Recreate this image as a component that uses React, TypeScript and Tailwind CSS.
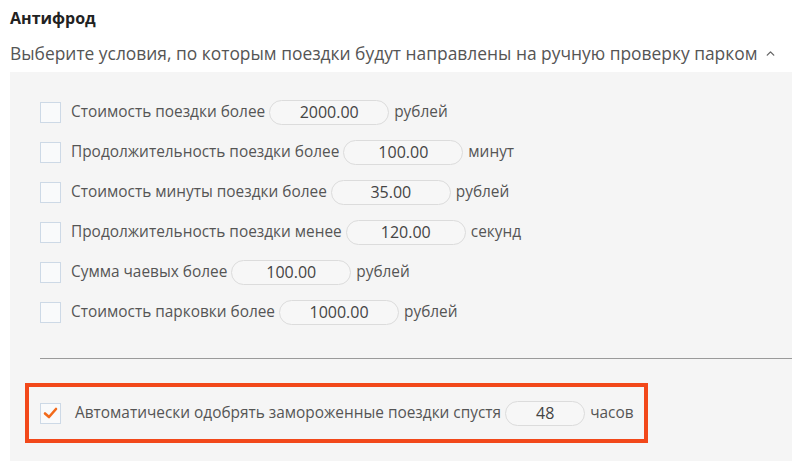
import { ChevronUp } from "lucide-react"

const rows = [
  { label: "Стоимость поездки более", value: "2000.00", unit: "рублей" },
  { label: "Продолжительность поездки более", value: "100.00", unit: "минут" },
  { label: "Стоимость минуты поездки более", value: "35.00", unit: "рублей" },
  { label: "Продолжительность поездки менее", value: "120.00", unit: "секунд" },
  { label: "Сумма чаевых более", value: "100.00", unit: "рублей" },
  { label: "Стоимость парковки более", value: "1000.00", unit: "рублей" },
]

function Box({ checked }: { checked?: boolean }) {
  return (
    <span className="flex h-[21px] w-[21px] shrink-0 items-center justify-center border border-[#cdd9e6] bg-[#f9fafb]">
      {checked && (
        <svg width="15" height="12" viewBox="0 0 15 12">
          <path d="M2 6.5 L6 10 L13 2" fill="none" stroke="#f26a1b" strokeWidth="2.6" strokeLinecap="round" strokeLinejoin="round" />
        </svg>
      )}
    </span>
  )
}

function Field({ value, w = "w-[120px]" }: { value: string; w?: string }) {
  return (
    <span className={`flex h-[25px] ${w} shrink-0 items-center justify-center rounded-full border border-[#dcdcdc] bg-[#f7f7f7] text-[16px] text-[#444]`}>
      {value}
    </span>
  )
}

export default function App() {
  return (
    <div className="h-[475px] w-[792px] overflow-hidden bg-white font-['Open_Sans',sans-serif] text-[#555]">
      <h1 className="pl-[10px] pt-[7px] text-[16px] font-bold leading-[22px] text-[#222]">Антифрод</h1>
      <div className="flex items-center whitespace-nowrap pl-[10px] pt-[12px] text-[17.4px] leading-[24px] text-[#555]">
        <span>Выберите условия, по которым поездки будут направлены на ручную проверку парком</span>
        <ChevronUp className="ml-[7px] h-[13px] w-[13px] shrink-0 text-[#666]" strokeWidth={2.5} />
      </div>
      <div className="ml-[10px] mt-[7px] h-[389px] bg-[#f5f5f5] pt-[20px]">
        <div className="flex flex-col">
          {rows.map((r) => (
            <div key={r.label} className="flex h-[40px] items-center whitespace-nowrap pl-[30px] text-[15.4px]">
              <Box />
              <span className="ml-[10px]">{r.label}</span>
              <span className="ml-[4px]">
                <Field value={r.value} />
              </span>
              <span className="ml-[5px]">{r.unit}</span>
            </div>
          ))}
        </div>
        <div className="ml-[30px] mt-[26px] h-px bg-[#9a9a9a]" />
        <div className="ml-[15px] mt-[24px] flex h-[60px] w-[623px] items-center whitespace-nowrap border-4 border-[#f2481a] pl-[11px] text-[15.4px]">
          <Box checked />
          <span className="ml-[14px]">Автоматически одобрять замороженные поездки спустя</span>
          <span className="ml-[4px]">
            <Field value="48" w="w-[80px]" />
          </span>
          <span className="ml-[5px]">часов</span>
        </div>
      </div>
    </div>
  )
}
